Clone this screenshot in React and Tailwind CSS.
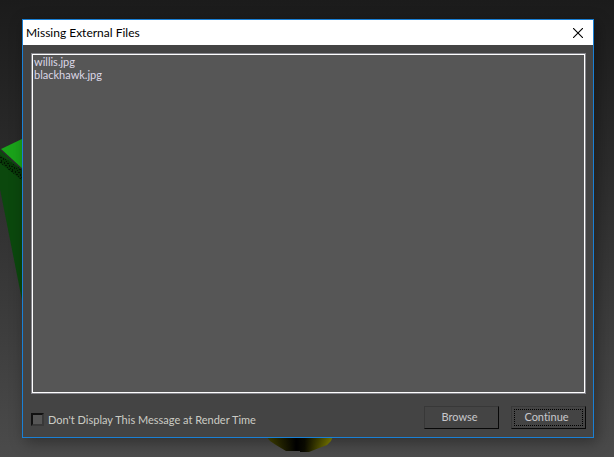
const files = ['willis.jpg', 'blackhawk.jpg'];

function Viewport() {
  return (
    <div className="absolute inset-0 overflow-hidden bg-linear-to-b from-[#1b1b1b] to-[#4b4b4b]" aria-hidden="true">
      <svg className="absolute top-0 left-0" width="614" height="457" viewBox="0 0 614 457">
        <defs>
          <linearGradient id="cone" x1="267" x2="332" y1="0" y2="0" gradientUnits="userSpaceOnUse">
            <stop offset="0" stopColor="#4a4a00" />
            <stop offset="0.45" stopColor="#000000" />
            <stop offset="0.58" stopColor="#0c0c00" />
            <stop offset="1" stopColor="#8c8c00" />
          </linearGradient>
          <pattern id="grain" width="11" height="9" patternUnits="userSpaceOnUse">
            <rect width="11" height="9" fill="#083808" />
            <path
              d="M0 0h2v1H0zM4 0h1v2H4zM7 1h2v1H7zM2 2h1v1H2zM5 3h2v1H5zM9 3h1v2H9zM0 4h2v1H0zM3 5h1v2H3zM7 5h1v1H7zM5 6h1v1H5zM8 7h2v1H8zM1 7h1v2H1zM6 8h1v1H6zM10 6h1v1H10z"
              fill="#031603"
            />
          </pattern>
        </defs>
        <path d="M0 150L24 172V309L22 300L0 189Z" fill="#0b480d" />
        <path d="M0 155L24 171V182L0 163Z" fill="url(#grain)" />
        <path d="M1 149L24 138V170Z" fill="#1aa31a" />
        <path d="M266 436H333L331 441L327 445L319 448L309 452H300V451H286L276 445L270 441Z" fill="url(#cone)" />
      </svg>
    </div>
  );
}

export default function App() {
  return (
    <main className="relative flex h-screen flex-col pt-[19px] pr-5 pb-[19px] pl-[22px] font-[Lato,sans-serif] [font-variant-ligatures:none]">
      <Viewport />
      <section
        role="dialog"
        aria-labelledby="title"
        className="relative flex min-h-0 flex-1 flex-col border border-[#1a80d5] bg-[#444444] shadow-[3px_4px_14px_rgba(0,0,0,0.35)]"
      >
        <header className="flex h-[25px] items-center justify-between bg-white pr-[10px] pl-[3px]">
          <h1 id="title" className="text-[12px] leading-4 text-black">
            Missing External Files
          </h1>
          <button type="button" aria-label="Close">
            <svg width="10" height="10" viewBox="0 0 10 10" fill="none" stroke="#000000" strokeWidth="1.1">
              <path d="M0 0L10 10M10 0L0 10" />
            </svg>
          </button>
        </header>
        <div className="flex min-h-0 flex-1 flex-col pt-2 pr-[7px] pb-2 pl-2">
          <div className="flex min-h-0 flex-1 border border-[#87878d]">
            <select
              multiple
              aria-label="Missing files"
              className="flex-1 appearance-none overflow-hidden rounded-none border border-white bg-[#565656] p-0 text-[11px] text-[#dcd7e6] outline-none"
            >
              {files.map((file) => (
                <option key={file} className="h-[13px] min-h-0 p-0 px-px leading-[13px]">
                  {file}
                </option>
              ))}
            </select>
          </div>
          <footer className="flex items-start justify-between pt-3">
            <label className="flex items-start gap-1 pt-[6px] text-[11px] leading-4 text-[#ccccc4]">
              <input
                type="checkbox"
                className="mt-px size-[13px] appearance-none border-2 border-t-[#111111] border-r-[#383838] border-b-[#383838] border-l-[#111111] bg-[#565656]"
              />
              Don't Display This Message at Render Time
            </label>
            <div className="flex gap-3 text-[11px] leading-4 text-[#c8c8cc]">
              <button
                type="button"
                className="h-[23px] w-[75px] border border-t-[#383838] border-r-[#080808] border-b-[#080808] border-l-[#383838] pr-1 pb-[2px]"
              >
                Browse
              </button>
              <button
                type="button"
                className="h-[23px] w-[75px] border border-t-[#383838] border-r-[#080808] border-b-[#080808] border-l-[#383838] p-[2px]"
              >
                <span className="flex h-full items-center justify-center border border-dotted border-black pr-1 pb-[2px]">
                  Continue
                </span>
              </button>
            </div>
          </footer>
        </div>
      </section>
    </main>
  );
}
